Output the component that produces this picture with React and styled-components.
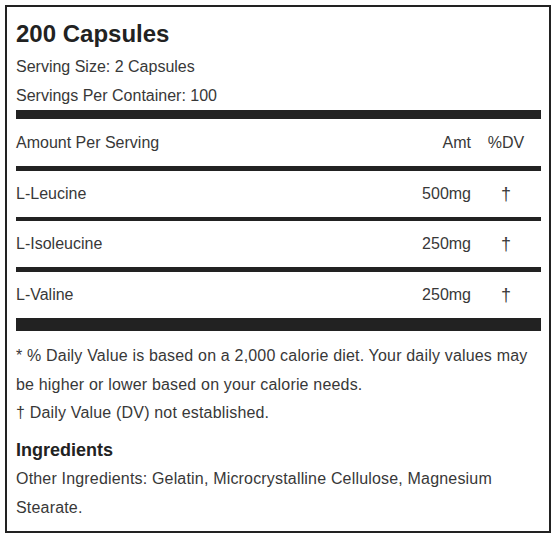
import React from 'react';
import styled, { createGlobalStyle } from 'styled-components';

const GlobalStyle = createGlobalStyle`
  body {
    margin: 0;
    background: #fff;
    font-family: "Liberation Sans", Arial, Helvetica, sans-serif;
  }
`;

const Panel = styled.div`
  box-sizing: border-box;
  width: 546px;
  margin: 5px;
  border: 2px solid #222;
  padding: 12px 8px 9px 9px;
  color: #383838;
`;

const Title = styled.h2`
  margin: 0 0 3px;
  font-size: 24px;
  line-height: 30px;
  font-weight: 700;
  color: #222;
`;

const Line = styled.div`
  font-size: 16px;
  line-height: 29px;
`;

const Bar = styled.div`
  height: ${(p) => p.$h}px;
  background: #222;
`;

const Row = styled.div`
  display: grid;
  grid-template-columns: 1fr auto 70px;
  align-items: center;
  height: ${(p) => p.$h || 46}px;
  font-size: 16px;
`;

const Amount = styled.span`
  text-align: right;
`;

const Dv = styled.span`
  text-align: center;
  font-size: ${(p) => (p.$mark ? '18px' : '16px')};
`;

const Notes = styled.div`
  margin-top: 11px;
  font-size: 16px;
  line-height: 28.5px;
  letter-spacing: 0.18px;
`;

const Note = styled.p`
  margin: 0;
`;

const Heading = styled.h3`
  margin: 12px 0 4px;
  font-size: 18px;
  line-height: 21.6px;
  font-weight: 700;
  letter-spacing: 0;
  color: #222;
`;

const rows = [
  { name: 'L-Leucine', amt: '500mg' },
  { name: 'L-Isoleucine', amt: '250mg' },
  { name: 'L-Valine', amt: '250mg' },
];

export default function App() {
  return (
    <>
      <GlobalStyle />
      <Panel>
        <Title>200 Capsules</Title>
        <Line>Serving Size: 2 Capsules</Line>
        <Line>Servings Per Container: 100</Line>
        <Bar $h={9} />
        <Row $h={47}>
          <span>Amount Per Serving</span>
          <Amount>Amt</Amount>
          <Dv>%DV</Dv>
        </Row>
        {rows.map((r, i) => (
          <React.Fragment key={r.name}>
            <Bar $h={i === 1 ? 4 : 5} />
            <Row>
              <span>{r.name}</span>
              <Amount>{r.amt}</Amount>
              <Dv $mark>†</Dv>
            </Row>
          </React.Fragment>
        ))}
        <Bar $h={13} />
        <Notes>
          <Note>* % Daily Value is based on a 2,000 calorie diet. Your daily values may be higher or lower based on your calorie needs.</Note>
          <Note>† Daily Value (DV) not established.</Note>
          <Heading>Ingredients</Heading>
          <Note>Other Ingredients: Gelatin, Microcrystalline Cellulose, Magnesium Stearate.</Note>
        </Notes>
      </Panel>
    </>
  );
}
